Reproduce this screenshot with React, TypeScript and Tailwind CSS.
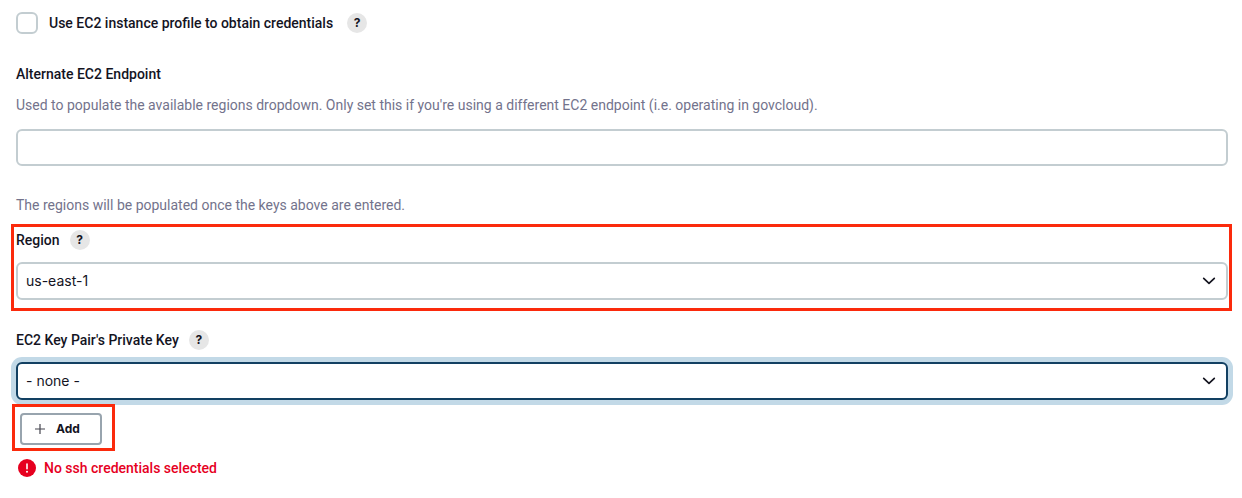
import type { ReactNode } from "react";

function HelpButton({ topic }: { topic: string }) {
  return (
    <button
      type="button"
      aria-label={`Help for feature: ${topic}`}
      className="flex size-5 items-center justify-center rounded-full bg-[#e6e6e6] font-['Inter',sans-serif] text-xs leading-5 font-bold text-[#14141f]"
    >
      ?
    </button>
  );
}

function Highlight({ className }: { className: string }) {
  return (
    <span
      aria-hidden="true"
      className={`pointer-events-none absolute border-3 border-[#fb2a0c] ${className}`}
    />
  );
}

function SelectField({
  id,
  active = false,
  children,
}: {
  id: string;
  active?: boolean;
  children: ReactNode;
}) {
  return (
    <div className="relative mt-3">
      <select
        id={id}
        className={`block h-[38px] w-full appearance-none rounded-md border-2 bg-white pr-10 pl-2 font-['Inter',sans-serif] text-sm text-[#14141f] outline-none ${
          active
            ? "border-[#124062] ring-5 ring-[#c2d9e7]"
            : "border-[#c3cdd1]"
        }`}
      >
        {children}
      </select>
      <svg
        aria-hidden="true"
        viewBox="0 0 14 8"
        className="pointer-events-none absolute top-[15px] right-3 h-2 w-3.5 fill-none stroke-[#14141f]"
        strokeWidth="1.7"
        strokeLinecap="round"
        strokeLinejoin="round"
      >
        <path d="M1.7 1.4 7 6.3l5.3-4.9" />
      </svg>
    </div>
  );
}

export default function App() {
  return (
    <main className="bg-white pt-3 pr-3.5 pb-5 pl-4 font-['Roboto',sans-serif] text-sm leading-5 text-[#14141f]">
      <form className="flex flex-col">
        <div className="flex h-[22px] items-center">
          <input
            id="instance-profile"
            type="checkbox"
            className="size-[22px] appearance-none rounded-md border-2 border-[#c3cdd1] bg-white checked:bg-[#124062]"
          />
          <label htmlFor="instance-profile" className="mr-3.5 ml-[11px] font-medium">
            Use EC2 instance profile to obtain credentials
          </label>
          <HelpButton topic="Use EC2 instance profile to obtain credentials" />
        </div>

        <label htmlFor="endpoint" className="mt-[30px] font-medium">
          Alternate EC2 Endpoint
        </label>
        <p id="endpoint-help" className="mt-[11px] text-[#73738c]">
          Used to populate the available regions dropdown. Only set this if you're using a different
          EC2 endpoint (i.e. operating in govcloud).
        </p>
        <input
          id="endpoint"
          type="text"
          aria-describedby="endpoint-help"
          className="mt-[14px] h-[37px] w-full rounded-md border-2 border-[#c3cdd1] px-2"
        />

        <p className="mt-[29px] text-[#73738c]">
          The regions will be populated once the keys above are entered.
        </p>

        <div className="relative mt-[15px]">
          <div className="flex items-center gap-2.5">
            <label htmlFor="region" className="font-medium">
              Region
            </label>
            <HelpButton topic="Region" />
          </div>
          <SelectField id="region">
            <option>us-east-1</option>
          </SelectField>
          <Highlight className="-top-1.5 -right-1 -bottom-[11px] -left-[5px]" />
        </div>

        <div className="mt-[30px]">
          <div className="flex items-center gap-2.5">
            <label htmlFor="private-key" className="font-medium">
              EC2 Key Pair's Private Key
            </label>
            <HelpButton topic="EC2 Key Pair's Private Key" />
          </div>
          <SelectField id="private-key" active>
            <option>- none -</option>
          </SelectField>
        </div>

        <div className="relative mt-[13px] ml-1 self-start">
          <button
            type="button"
            className="flex h-8 items-center gap-2.5 rounded border-2 border-[#98a4ae] bg-white pr-5 pl-3 font-['Inter',sans-serif] text-xs font-bold"
          >
            <svg aria-hidden="true" viewBox="0 0 12 12" className="size-3 stroke-[#45454f]" strokeWidth="1.2">
              <path d="M6 1v10M1 6h10" />
            </svg>
            Add
          </button>
          <Highlight className="-top-[9px] -right-[13px] -bottom-1.5 -left-2" />
        </div>

        <p role="alert" className="mt-[13px] ml-0.5 flex items-center gap-2 font-medium text-[#e6001f]">
          <svg aria-hidden="true" viewBox="0 0 18 18" className="size-[18px]">
            <circle cx="9" cy="9" r="9" fill="#e6001f" />
            <path d="M9 5v4.8" stroke="#fff" strokeWidth="1.6" strokeLinecap="round" />
            <circle cx="9" cy="12.8" r="1" fill="#fff" />
          </svg>
          No ssh credentials selected
        </p>
      </form>
    </main>
  );
}
